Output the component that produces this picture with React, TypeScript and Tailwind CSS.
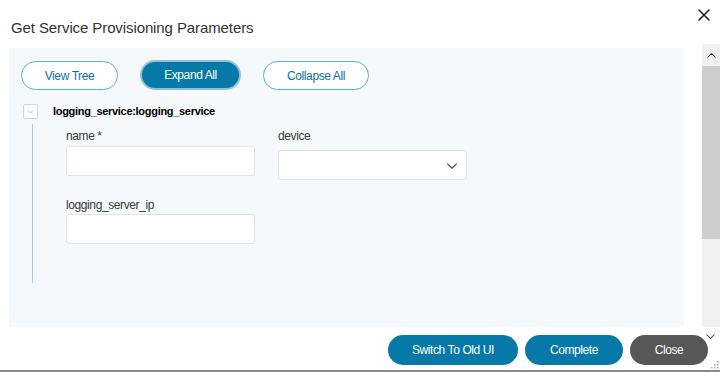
import React from 'react';

const fontStack = { fontFamily: '"Liberation Sans", Arial, sans-serif' };

function Chevron({ className, up }: { className?: string; up?: boolean }) {
  return (
    <svg viewBox="0 0 12 8" className={className} fill="none">
      <path
        d={up ? 'M1 7 L6 2 L11 7' : 'M1 1 L6 6 L11 1'}
        stroke="currentColor"
        strokeWidth="1.4"
        strokeLinecap="round"
        strokeLinejoin="round"
      />
    </svg>
  );
}

function OutlineButton({ label, width }: { label: string; width: string }) {
  return (
    <button
      className={`${width} h-[29px] rounded-full border border-[#5aaed3] bg-white text-[12px] tracking-[-0.4px] text-[#0b73a4]`}
    >
      {label}
    </button>
  );
}

function Field({
  label,
  select,
  gap,
}: {
  label: string;
  select?: boolean;
  gap: string;
}) {
  return (
    <div className="flex flex-col">
      <label
        className={`text-[12px] leading-[16px] tracking-[-0.4px] text-[#3a3a3a] ${gap}`}
      >
        {label}
      </label>
      <div className="relative flex h-[30px] w-[189px] items-center rounded-[3px] border border-[#dde3e8] bg-white">
        {select && (
          <Chevron className="absolute right-[8px] top-[12px] h-[7px] w-[12px] text-[#555]" />
        )}
      </div>
    </div>
  );
}

export default function App() {
  return (
    <div
      className="relative h-[372px] w-[720px] overflow-hidden bg-white"
      style={fontStack}
    >
      {/* header */}
      <div className="flex h-[48px] items-start justify-between">
        <h1 className="pl-[11px] pt-[19px] text-[15px] leading-[18px] tracking-[-0.1px] text-[#333]">
          Get Service Provisioning Parameters
        </h1>
        <button className="mr-[9px] mt-[8px] h-[13px] w-[13px] text-[#222]">
          <svg viewBox="0 0 12 12" className="h-[12px] w-[12px]">
            <path
              d="M1 1 L11 11 M11 1 L1 11"
              stroke="currentColor"
              strokeWidth="1.6"
              strokeLinecap="round"
            />
          </svg>
        </button>
      </div>

      {/* content panel */}
      <div className="ml-[9px] h-[279px] w-[675px] bg-[#f5f9fc] pl-[12px] pt-[13px]">
        <div className="flex gap-[22px]">
          <OutlineButton label="View Tree" width="w-[97px]" />
          <button className="-mt-[1px] h-[30px] w-[101px] rounded-full border-2 border-[#8cc3dc] bg-[#0679a8] text-[12px] tracking-[-0.4px] text-white">
            Expand All
          </button>
          <OutlineButton label="Collapse All" width="w-[106px]" />
        </div>

        <div className="mt-[14px] flex items-center pl-[2px]">
          <div className="flex h-[15px] w-[15px] items-center justify-center rounded-[2px] border border-[#cfd6dc] bg-white">
            <Chevron className="h-[4px] w-[7px] text-[#9aa3aa]" />
          </div>
          <span className="ml-[15px] text-[11px] font-bold leading-[15px] tracking-[-0.3px] text-black">
            logging_service:logging_service
          </span>
        </div>

        <div className="ml-[11px] mt-[5px] h-[159px] border-l border-[#a9c9dd] pl-[33px] pt-[4px]">
          <div className="grid grid-cols-[189px_189px] gap-x-[23px] gap-y-[17px]">
            <Field label="name *" gap="mb-[2px]" />
            <Field label="device" select gap="mb-[6px]" />
            <Field label="logging_server_ip" gap="mb-[1px]" />
          </div>
        </div>
      </div>

      {/* scrollbar */}
      <div className="absolute right-0 top-[44px] flex w-[18px] flex-col">
        <div className="flex h-[22px] items-center justify-center bg-[#f0f0f0]">
          <Chevron up className="h-[6px] w-[9px] text-[#333]" />
        </div>
        <div className="h-[173px] bg-[#cdcdcd]" />
        <div className="h-[88px] bg-[#f0f0f0]" />
      </div>

      {/* footer */}
      <div className="flex justify-end gap-[7px] pr-[12px] pt-[8px]">
        <button className="h-[30px] w-[130px] rounded-full bg-[#0679a8] text-[12px] tracking-[-0.4px] text-white">
          Switch To Old UI
        </button>
        <button className="h-[30px] w-[98px] rounded-full bg-[#0679a8] text-[12px] tracking-[-0.4px] text-white">
          Complete
        </button>
        <button className="h-[30px] w-[78px] rounded-full bg-[#575757] text-[12px] tracking-[-0.4px] text-white">
          Close
        </button>
      </div>

      <Chevron className="absolute right-[5px] top-[334px] h-[6px] w-[9px] text-[#333]" />

      {/* resize grip */}
      <svg
        viewBox="0 0 9 9"
        className="absolute bottom-[3px] right-[1px] h-[9px] w-[9px] text-[#aaa]"
        fill="currentColor"
      >
        <rect x="7" y="1" width="1.5" height="1.5" />
        <rect x="4" y="4" width="1.5" height="1.5" />
        <rect x="7" y="4" width="1.5" height="1.5" />
        <rect x="1" y="7" width="1.5" height="1.5" />
        <rect x="4" y="7" width="1.5" height="1.5" />
        <rect x="7" y="7" width="1.5" height="1.5" />
      </svg>

      <div className="absolute bottom-0 left-0 h-[2px] w-full bg-[#8a8a8a]" />
    </div>
  );
}
